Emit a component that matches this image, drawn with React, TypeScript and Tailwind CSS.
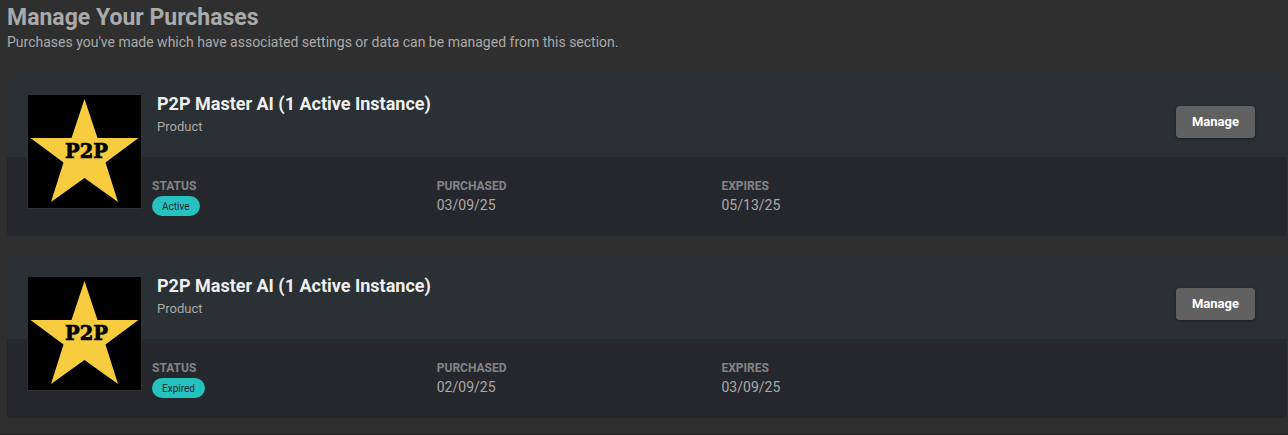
import React from "react";

type Purchase = {
  id: number;
  title: string;
  type: string;
  status: string;
  purchased: string;
  expires: string;
};

const purchases: Purchase[] = [
  {
    id: 1,
    title: "P2P Master AI (1 Active Instance)",
    type: "Product",
    status: "Active",
    purchased: "03/09/25",
    expires: "05/13/25",
  },
  {
    id: 2,
    title: "P2P Master AI (1 Active Instance)",
    type: "Product",
    status: "Expired",
    purchased: "02/09/25",
    expires: "03/09/25",
  },
];

const ProductLogo: React.FC = () => (
  <svg viewBox="0 0 113 113" className="block h-full w-full" role="img" aria-label="P2P">
    <rect width="113" height="113" fill="#000" />
    <polygon
      points="56.5,4 69.5,43 110.5,43 77.5,67.5 90,107 56.5,83 23,107 35.5,67.5 2.5,43 43.5,43"
      fill="#f7cc3e"
    />
    <text
      x="58.5"
      y="62.5"
      textAnchor="middle"
      fontFamily="'DejaVu Serif', serif"
      fontWeight="700"
      fontSize="19.5"
      fill="#000"
      stroke="#000"
      strokeWidth="0.7"
    >
      P2P
    </text>
  </svg>
);

const Detail: React.FC<{ label: string; children: React.ReactNode }> = ({ label, children }) => (
  <div>
    <dt className="text-xs leading-[18px] font-bold text-[#858585] uppercase">{label}</dt>
    <dd className="text-sm leading-[21px] text-[#aaaaaa]">{children}</dd>
  </div>
);

const PurchaseCard: React.FC<{ purchase: Purchase }> = ({ purchase }) => (
  <article className="relative overflow-hidden rounded bg-[#26272c]">
    {/* the logo hangs over the header and the details */}
    <div className="absolute top-5 left-5 size-[115px] border border-[#303030]">
      <ProductLogo />
    </div>
    <header className="flex h-[83px] items-start justify-between bg-[#2b3034] pr-8 pl-[150px]">
      <div className="pt-[18px]">
        <h2 className="text-lg leading-6 font-bold text-[#eeeeee]">{purchase.title}</h2>
        <p className="text-[13px] leading-[21px] text-[#aaaaaa]">{purchase.type}</p>
      </div>
      <button
        type="button"
        className="mt-8 h-8 rounded bg-[#616161] px-4 text-[13px] font-bold text-white shadow-[0_1px_3px_rgba(0,0,0,0.4)]"
      >
        Manage
      </button>
    </header>
    <dl className="grid h-[79px] grid-cols-4 gap-1 pt-5 pl-[145px]">
      <Detail label="Status">
        <span className="mt-px flex h-5 w-fit items-center rounded-full bg-[#25c2c0] px-[10px] text-[10px] text-[#26272c]">
          {purchase.status}
        </span>
      </Detail>
      <Detail label="Purchased">{purchase.purchased}</Detail>
      <Detail label="Expires">{purchase.expires}</Detail>
    </dl>
  </article>
);

const App: React.FC = () => {
  return (
    <main className="min-h-screen border-b border-[#1f1f1f] bg-[#2f2f2f] pt-1 pr-px pl-[7px] font-['Roboto',sans-serif]">
      <h1 className="text-[23px] leading-7 font-bold text-[#aaaaaa]">Manage Your Purchases</h1>
      <p className="text-sm leading-5 text-[#aaaaaa]">
        Purchases you've made which have associated settings or data can be managed from this section.
      </p>
      <section className="flex flex-col gap-5 pt-[22px]">
        {purchases.map((purchase) => (
          <PurchaseCard key={purchase.id} purchase={purchase} />
        ))}
      </section>
    </main>
  );
};

export default App;
